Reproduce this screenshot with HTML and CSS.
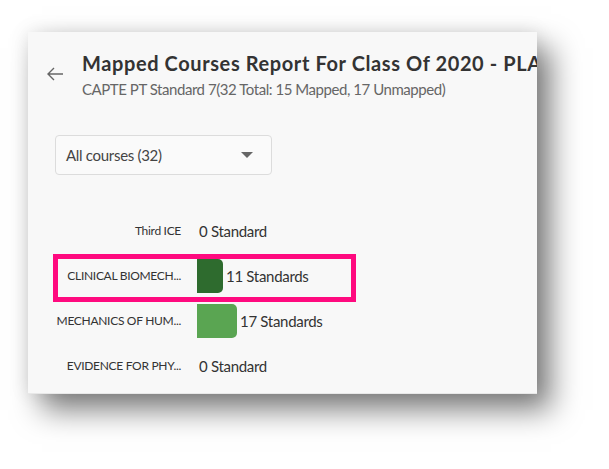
FILE: index.html
```html
<!DOCTYPE html>
<html>
<head>
<meta charset="utf-8">
<link rel="stylesheet" href="styles.css">
</head>
<body>
<div class="frame">
  <div class="card">
    <div class="header">
      <svg class="back" width="18" height="14" viewBox="0 0 18 14">
        <path d="M17 7H2M8 1L2 7l6 6" fill="none" stroke="#666" stroke-width="1.4"/>
      </svg>
      <div class="titles">
        <div class="title">Mapped Courses Report For Class Of 2020 - PLAN</div>
        <div class="subtitle">CAPTE PT Standard 7(32 Total: 15 Mapped, 17 Unmapped)</div>
      </div>
    </div>
    <div class="select">
      <span>All courses (32)</span>
      <span class="caret"></span>
    </div>
    <div class="chart">
      <div class="row">
        <div class="label">Third ICE</div>
        <div class="value zero">0 Standard</div>
      </div>
      <div class="row highlight">
        <div class="label">CLINICAL BIOMECH...</div>
        <div class="bar dark" style="width:26px"></div>
        <div class="value">11 Standards</div>
      </div>
      <div class="row">
        <div class="label">MECHANICS OF HUM...</div>
        <div class="bar light" style="width:40px"></div>
        <div class="value">17 Standards</div>
      </div>
      <div class="row">
        <div class="label">EVIDENCE FOR PHY...</div>
        <div class="value zero">0 Standard</div>
      </div>
    </div>
  </div>
</div>
</body>
</html>
```

FILE: styles.css
```css
html, body {
  margin: 0;
  padding: 0;
  background: #ffffff;
}
body {
  width: 609px;
  height: 469px;
  overflow: hidden;
  font-family: "Lato", "Liberation Sans", sans-serif;
}
.frame {
  padding: 32px 0 0 28px;
}
.card {
  width: 509px;
  height: 362px;
  background: #f8f8f8;
  overflow: hidden;
  box-shadow: 0 0 18px rgba(0,0,0,0.10), 14px 16px 28px rgba(0,0,0,0.5);
  border-bottom: 1px solid #e8e8e8;
  box-sizing: border-box;
}
.header {
  display: flex;
  align-items: flex-start;
  padding: 18px 0 0 18px;
}
.back {
  margin-top: 17px;
  flex: none;
}
.titles {
  margin-left: 18px;
  white-space: nowrap;
}
.title {
  font-size: 20px;
  font-weight: 700;
  color: #333;
  line-height: 26px;
  letter-spacing: 0.6px;
}
.subtitle {
  font-size: 15px;
  color: #666;
  line-height: 20px;
  margin-top: 3px;
  letter-spacing: -0.45px;
}
.select {
  margin: 36px 0 0 27px;
  width: 217px;
  height: 40px;
  box-sizing: border-box;
  border: 1px solid #dcdcdc;
  border-radius: 4px;
  background: #fafafa;
  display: flex;
  align-items: center;
  justify-content: space-between;
  padding: 0 18px 0 10px;
  font-size: 15px;
  color: #444;
  letter-spacing: -0.3px;
}
.caret {
  width: 0;
  height: 0;
  border-left: 6px solid transparent;
  border-right: 6px solid transparent;
  border-top: 6px solid #666;
}
.chart {
  margin-top: 33px;
  display: flex;
  flex-direction: column;
}
.row {
  display: flex;
  align-items: center;
  height: 45px;
  position: relative;
}
.label {
  width: 153px;
  text-align: right;
  font-size: 12px;
  color: #333;
  flex: none;
  letter-spacing: -0.3px;
}
.bar {
  height: 34px;
  margin-left: 16px;
  border-radius: 0 5px 5px 0;
  flex: none;
}
.bar.dark { background: #2e6b2e; }
.bar.light { background: #5aa552; }
.value {
  font-size: 15px;
  color: #333;
  margin-left: 3px;
  letter-spacing: -0.3px;
}
.value.zero {
  margin-left: 18px;
}
.highlight::after {
  content: "";
  position: absolute;
  left: 25px;
  top: 1px;
  width: 303px;
  height: 48px;
  box-sizing: border-box;
  border: 5px solid #ff0a7f;
}
```
